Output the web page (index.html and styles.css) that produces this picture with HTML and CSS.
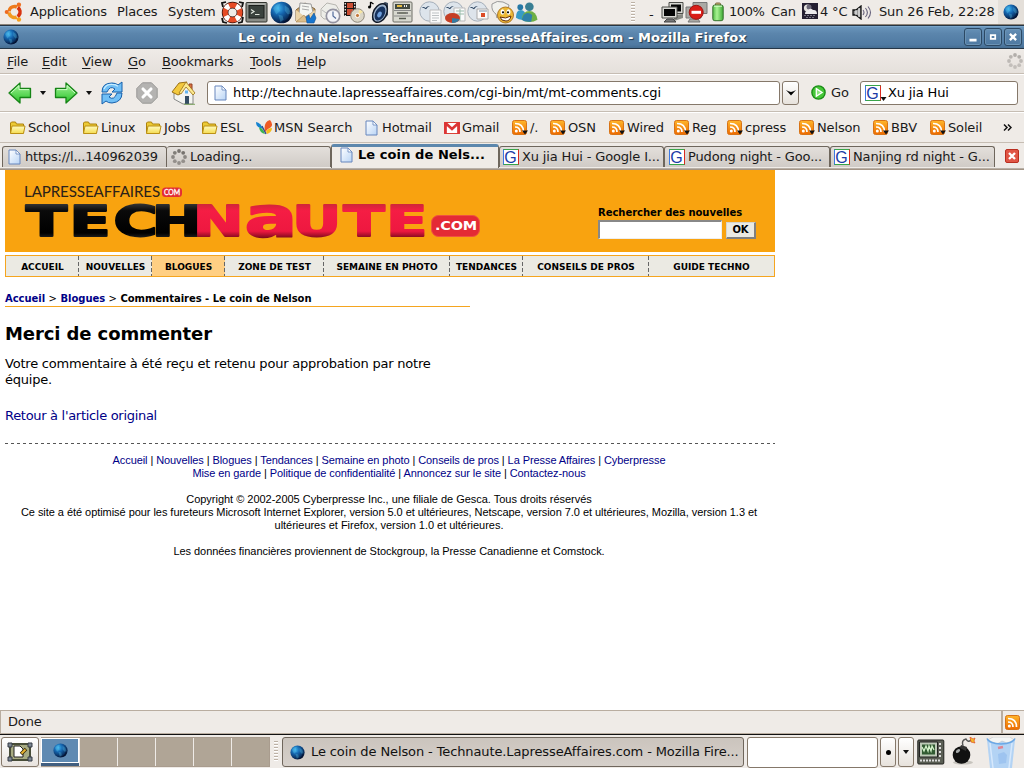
FILE: index.html
```html
<!DOCTYPE html>
<html lang="fr">
<head>
<meta charset="utf-8">
<title>Le coin de Nelson - Technaute.LapresseAffaires.com</title>
<link rel="stylesheet" href="styles.css">
</head>
<body>
<svg class="defs" width="0" height="0" aria-hidden="true">
<defs>
<radialGradient id="gGlobe" cx=".35" cy=".3" r=".75"><stop offset="0" stop-color="#3fb4ee"/><stop offset=".4" stop-color="#1565ae"/><stop offset="1" stop-color="#041336"/></radialGradient>
<linearGradient id="gGreen" x1="0" y1="0" x2="0" y2="1"><stop offset="0" stop-color="#a6f49a"/><stop offset="1" stop-color="#27c227"/></linearGradient>
<linearGradient id="gOrange" x1="0" y1="0" x2="0" y2="1"><stop offset="0" stop-color="#ffb62b"/><stop offset="1" stop-color="#ed6a00"/></linearGradient>
<linearGradient id="gPage" x1="0" y1="0" x2="1" y2="1"><stop offset="0" stop-color="#fff"/><stop offset="1" stop-color="#b9d4f5"/></linearGradient>
<linearGradient id="gFold" x1="0" y1="0" x2="0" y2="1"><stop offset="0" stop-color="#fffbc0"/><stop offset="1" stop-color="#f5dc50"/></linearGradient>
<linearGradient id="gBatt" x1="0" y1="0" x2="1" y2="0"><stop offset="0" stop-color="#51ba45"/><stop offset=".4" stop-color="#a9f393"/><stop offset="1" stop-color="#3ea933"/></linearGradient>
<linearGradient id="gBlack" gradientUnits="userSpaceOnUse" x1="0" y1="23" x2="0" y2="57"><stop offset="0" stop-color="#333"/><stop offset=".2" stop-color="#0a0a0a"/><stop offset=".85" stop-color="#000"/><stop offset="1" stop-color="#222"/></linearGradient>
<linearGradient id="gRed" gradientUnits="userSpaceOnUse" x1="0" y1="23" x2="0" y2="57"><stop offset="0" stop-color="#cf2638"/><stop offset=".2" stop-color="#f51d44"/><stop offset=".8" stop-color="#ee1840"/><stop offset="1" stop-color="#7d0a1c"/></linearGradient>
</defs>
<symbol id="ubuntu" viewBox="0 0 20 20"><g fill="none" stroke-width="3.600" stroke-dasharray="10.400 24.160"><circle cx="10.500" cy="10" r="5.500" stroke="#ee7a1c" transform="rotate(186 10.500 10)"/><circle cx="10.500" cy="10" r="5.500" stroke="#d8330f" transform="rotate(-54 10.500 10)"/><circle cx="10.500" cy="10" r="5.500" stroke="#f29a20" transform="rotate(66 10.500 10)"/></g><circle cx="2.700" cy="10" r="2" fill="#ee6b20"/><circle cx="14.900" cy="2.800" r="2.200" fill="#f07020"/><circle cx="14.900" cy="17.500" r="2.200" fill="#f6a01c"/></symbol>
<symbol id="life" viewBox="0 0 23 23"><path d="M2 6 1 2l4-1M18 1l4 1-1 4M1 17l1 4 4 1M17 22l4-1 1-5" fill="none" stroke="#111" stroke-width="1.8"/><circle cx="11.5" cy="11.5" r="7.4" fill="none" stroke="#37120c" stroke-width="6.6"/><circle cx="11.5" cy="11.5" r="7.4" fill="none" stroke="#e64b25" stroke-width="5.2"/><circle cx="11.5" cy="11.5" r="7.4" fill="none" stroke="#fff" stroke-width="5.2" stroke-dasharray="4.6 7.02" transform="rotate(27 11.5 11.5)"/></symbol>
<symbol id="term" viewBox="0 0 23 23"><rect x="1" y="1.500" width="21" height="19.500" rx="1" fill="#8b8e88" stroke="#33352f"/><path d="M2.500 3h18" stroke="#c9cbc6"/><rect x="4" y="4.500" width="15" height="12.500" fill="#3a423d" stroke="#1c1f1c"/><path d="m6 8.500 3 2-3 2M10 13.500h4.500" fill="none" stroke="#dfe5dc" stroke-width="1.200"/></symbol>
<symbol id="globe" viewBox="0 0 22 22"><circle cx="11" cy="11" r="10.4" fill="url(#gGlobe)"/><path d="M3 7q3-5 7-4l-2 4 2 2-4 4zm11-3 4 3 2 5-3 1-3-4zm-6 9 4 1 1 4-3 2z" fill="#63cdf0" opacity=".3"/><path d="M11 20q8-2 8-10 3 8-3 10z" fill="#020b24" opacity=".5"/></symbol>
<symbol id="mail" viewBox="0 0 23 23"><path d="m2 9 9-7 10 6-1 12H2z" fill="#caa266" stroke="#806338"/><path d="m6 2 11 1 2 8-8 5-6-3z" fill="#f5f6f2" stroke="#999"/><path d="m8 5 7 1M8 8l7 1" stroke="#aaa"/><path d="m2 9 8 6-8 6zM21 9l-9 7 8 5z" fill="#ead3a8"/><path d="m2 21 8-7 5 7z" fill="#dcbf8c" stroke="#a98550" stroke-width=".6"/><path d="m12 16 3-2 1 4 4-6 2 5-2 5h-7z" fill="#1775ce" stroke="#135093" stroke-width=".6"/></symbol>
<symbol id="mailclock" viewBox="0 0 23 23"><path d="m3 8 6-6 9 2 3 5v8l-15 1-3-3z" fill="#edede8" stroke="#b7b6b0"/><path d="m4 9 7 5 8-6" fill="none" stroke="#bbb"/><circle cx="15" cy="15" r="6.7" fill="#f4f4f8" stroke="#9493a1" stroke-width="1.7"/><path d="M15 10.5V15l3 2.5" fill="none" stroke="#526b9b" stroke-width="1.2"/></symbol>
<symbol id="film" viewBox="0 0 23 23"><path d="M2 1h12v14H2z" fill="#1a1413"/><path d="M5 2h6v5H5zM5 8h6v6H5z" fill="#c94e34"/><path d="M3.3 2v13M12.7 2v13" stroke="#eee" stroke-width="1.3" stroke-dasharray="1.5 1.5"/><circle cx="15.5" cy="14.5" r="6.8" fill="#dbd6c7" stroke="#8e887b"/><path d="m15.5 14.5 2-6 3.5 2.2z" fill="#f8e7a3"/><circle cx="15.5" cy="14.5" r="2.1" fill="#c3793a" stroke="#fff"/></symbol>
<symbol id="speaker" viewBox="0 0 23 23"><path d="M7 8 18 1l3 1v12l-8 7-8-2z" fill="#39465a"/><ellipse cx="13" cy="12" rx="6.500" ry="10" fill="#9db2cc" stroke="#111927" stroke-width="1.500" transform="rotate(28 13 12)"/><ellipse cx="13" cy="12.500" rx="4.600" ry="7.600" fill="#16325e" transform="rotate(28 13 12.500)"/><ellipse cx="12.500" cy="13.500" rx="2" ry="3" fill="#6fa0dd" transform="rotate(28 12.500 13.500)"/><path d="M3.500 1v5M3.500 1l3 2" stroke="#000" stroke-width="1.3"/><circle cx="2.500" cy="6" r="1.5"/></symbol>
<symbol id="drawer" viewBox="0 0 23 23"><rect x="2" y="1" width="19" height="20" rx="1" fill="#d8d8cf" stroke="#6c6d64"/><path d="M4 3h15v5H4z" fill="#444b42"/><path d="M6 5h5" stroke="#e6bd42" stroke-width="2"/><path d="M13 5h4" stroke="#eee" stroke-dasharray="1 1" stroke-width="2"/><path d="M3 9.5h17M3 15h17" stroke="#888"/><circle cx="7" cy="12" r="1" fill="#666"/><circle cx="16" cy="12" r="1" fill="#666"/><path d="M8 12h7M8 17.5h7" stroke="#575b50" stroke-width="1.6"/></symbol>
<symbol id="ooball" viewBox="0 0 23 23"><circle cx="10.5" cy="10.5" r="9.7" fill="#dde4eb" stroke="#a4aeb9"/><path d="M2.500 6.500q2.500-1 4 .500Q8 5 11 5 8.500 6 7 8.300 5 6.800 2.500 6.500z" fill="#243d5a"/></symbol>
<symbol id="oodoc" viewBox="0 0 23 23"><use href="#ooball"/><path d="M11 9h11v13H11z" fill="#fafafa" stroke="#bbb"/><path d="M13 12h7M13 14.5h7M13 17h7M13 19.5h5" stroke="#bdc1c3"/></symbol>
<symbol id="oochart" viewBox="0 0 23 23"><use href="#ooball"/><path d="M11 7h11v13H11z" fill="#fafafa" stroke="#bbb"/><path d="M13 10h8M13 13h8M17 8v12" stroke="#9ba"/><ellipse cx="9.500" cy="17" rx="7.500" ry="5" fill="#c53f25"/><path d="M9 17v5q6 0 7.5-4z" fill="#347ba1"/></symbol>
<symbol id="oopres" viewBox="0 0 23 23"><use href="#ooball"/><path d="M10 8h11v10H10z" fill="#fafafa" stroke="#aaa"/><path d="M12 10h8" stroke="#9ab" stroke-width="1.3"/><path d="M14 12h4v4h-4z" fill="#db4b27"/></symbol>
<symbol id="smiley" viewBox="0 0 23 23"><path d="M1 3q5-4 11-2l6 3-2 8-8 1-2 4-1-4Q0 10 1 3z" fill="#f1f1ed" stroke="#999"/><circle cx="14.5" cy="14" r="8" fill="#ecb834" stroke="#ae782b"/><ellipse cx="11.5" cy="11" rx="2" ry="2.7" fill="#fff"/><ellipse cx="17.5" cy="11" rx="2" ry="2.7" fill="#fff"/><circle cx="12" cy="11.3" r="1.1"/><circle cx="17" cy="11.3" r="1.1"/><path d="M9 16q5.500 2.500 11-1-1 5-5 5-5 0-6-4z" fill="#fff" stroke="#652f0b"/></symbol>
<symbol id="msn" viewBox="0 0 24 23"><circle cx="5.500" cy="6" r="3" fill="#2678a6"/><path d="M1 17q0-8 5-8t6 8q-5 4-11 0z" fill="#379bc6"/><circle cx="15" cy="5.500" r="4.500" fill="#397e93"/><path d="M7 19q1-9 8-9t8.500 9q-8 5-16.500 0z" fill="#6eaf45"/><path d="M9 14q4-4 9 0l-1 7q-7 1-10-2z" fill="#2f80a8"/></symbol>
<symbol id="network" viewBox="0 0 23 23"><path d="M8 1.5h14v11H8z" fill="#d9d9d4" stroke="#4c4c48"/><path d="M10 3.5h10v7H10z" fill="#050505"/><path d="m13 14 9-1v4l-9 3z" fill="#888983"/><path d="M1 6h15v11H1z" fill="#d9d9d4" stroke="#4c4c48"/><path d="M3 8h11v7H3z" fill="#050505"/><path d="M6 18h6l3 3H3z" fill="#777" stroke="#444"/></symbol>
<symbol id="blocked" viewBox="0 0 23 23"><path d="M8 1.5h14v11H8zM1 6h15v11H1zM5 18h8l2 3H3z" fill="#aaa9a4" stroke="#777"/><circle cx="11.2" cy="11.3" r="7" fill="#d91e18" stroke="#9d1512"/><path d="M6.5 11.3h9.5" stroke="#fff" stroke-width="3"/></symbol>
<symbol id="battery" viewBox="0 0 12 20"><rect x="3.5" y="1" width="5" height="4" rx="1" fill="#c9b06f" stroke="#7c6945"/><rect x=".8" y="3" width="10.4" height="15.7" rx="2" fill="url(#gBatt)" stroke="#36702d"/><path d="M2 4.2h8" stroke="#d8ffc8"/></symbol>
<symbol id="weather" viewBox="0 0 16 16"><path d="M0 0h16v16H0z" fill="#241f31"/><circle cx="5.500" cy="5" r="3.600" fill="#e6e4e0"/><circle cx="7" cy="4" r="2.500" fill="#6c6878"/><path d="M3 11q0-3.500 3-3.500 2-3 5-.500 4-.500 4 4z" fill="#eceaec"/><path d="M2 12.500h12M4 14.500h8" stroke="#777482" stroke-dasharray="2 1"/></symbol>
<symbol id="volume" viewBox="0 0 20 15"><path d="M1 5h3l5-4v13l-5-4H1z" fill="#999" stroke="#111" stroke-width="1.3"/><path d="M4 5v5M7 3v9" stroke="#fff"/><path d="M11 5q2 2.5 0 5M13.4 3q4 4.5 0 9M16 1.5q5 6 0 12" fill="none" stroke="#68647e" stroke-width="1.1"/></symbol>
<symbol id="back" viewBox="0 0 24 22"><path d="M1 11 12 1v5.5h10.5v9H12V21z" fill="url(#gGreen)" stroke="#168416" stroke-width="1.3" stroke-linejoin="round"/><path d="M3 11 11 3.6v4h10" fill="none" stroke="#cdffc7"/></symbol>
<symbol id="refresh" viewBox="0 0 24 24"><path d="M2 11Q2 2 12 2q4 0 6 2l4-3v10H12l3-3q-5-4-8 3z" fill="#70bff6" stroke="#1660ac" stroke-linejoin="round"/><path d="M22 12q0 9-10 10-4 0-6-2l-4 3V13h10l-3 3q5 4 8-4z" fill="#70bff6" stroke="#1660ac" stroke-linejoin="round"/><path d="M4 8q2-5 8-4.7 4 0 6 2" fill="none" stroke="#c9eeff" stroke-width="1.3"/></symbol>
<symbol id="stop" viewBox="0 0 22 22"><path d="M6.5.8h9l5.7 5.7v9l-5.7 5.7h-9L.8 15.500V6.500z" fill="#b4b3b1" stroke="#999896"/><path d="m7 7 8 8m0-8-8 8" stroke="#fff" stroke-width="3.1" stroke-linecap="round"/></symbol>
<symbol id="home" viewBox="0 0 25 24"><path d="M18 3h3v6h-3z" fill="#dc7244" stroke="#934222"/><path d="M3 11 13 3l9 9v11H12l-9-5z" fill="#f3f4f1" stroke="#888"/><path d="m1 11 7-9 8-1-7 12-2 1z" fill="#f3c93e" stroke="#9a7017"/><path d="m15 1 9 11-2 2-7-8-5 7-2-1z" fill="#fce98e" stroke="#9a7017" stroke-width=".8"/><path d="M14 15h4v8h-4z" fill="#344d64"/><path d="M14 9.500h3v3h-3z" fill="#64b5f0"/><path d="M13 23.300h11" stroke="#7ca45e"/></symbol>
<symbol id="page" viewBox="0 0 13 16"><path d="M1 1h7l4 4v10H1z" fill="url(#gPage)" stroke="#6686bd"/><path d="M8 1v4h4z" fill="#fff" stroke="#6686bd" stroke-width=".8"/></symbol>
<symbol id="go" viewBox="0 0 15 15"><circle cx="7.500" cy="7.500" r="6.600" fill="#46c738" stroke="#198d15" stroke-width="1.4"/><path d="m5.300 3.600 5.800 3.900-5.800 3.900z" fill="#8be77d" stroke="#fff" stroke-width="1.3"/></symbol>
<symbol id="folder" viewBox="0 0 16 14"><path d="M1 12V2l1-1h4l1 2h7v9z" fill="#ecca35" stroke="#ad820c"/><path d="m1 12.500 1.500-7.500h13L14 12.500z" fill="url(#gFold)" stroke="#bc9015"/></symbol>
<symbol id="butterfly" viewBox="0 0 17 16"><path d="M7 9Q5 3 0 2q0 4 3 5.500z" fill="#1683d0"/><path d="M3 7.500q4 0 6 6.500-5-1-6-6.500z" fill="#3bb550"/><path d="M9 12Q7 2 14 0q5 6-2 9z" fill="#ef5a24"/><path d="M10 12q2-4 6-4 0 4-5 6z" fill="#f6bd1b"/><path d="m6 6 4 8" stroke="#28458b" stroke-width="1.300"/></symbol>
<symbol id="gmail" viewBox="0 0 16 12"><path d="M.5.500h15v11H.500z" fill="#fff" stroke="#dc4137"/><path d="M1.500 12V1l6.500 6 6.500-6v11" fill="none" stroke="#dc3535" stroke-width="2.700"/></symbol>
<symbol id="rss" viewBox="0 0 15 15"><rect x=".5" y=".5" width="14" height="14" rx="2" fill="url(#gOrange)" stroke="#d87316"/><circle cx="4.300" cy="11" r="1.500" fill="#fff"/><path d="M3 7q5 0 5 5M3 3.500q8.500 0 8.500 8.500" fill="none" stroke="#fff" stroke-width="1.700"/></symbol>
<symbol id="arrow" viewBox="0 0 6 4"><path d="M0 0h6L3 4z" fill="#111"/></symbol>
<symbol id="throb" viewBox="0 0 16 16"><g fill="currentColor"><circle cx="8" cy="2" r="1.900"/><circle cx="12.200" cy="3.800" r="1.900"/><circle cx="14" cy="8" r="1.900" opacity=".8"/><circle cx="12.200" cy="12.200" r="1.900" opacity=".7"/><circle cx="8" cy="14" r="1.900" opacity=".7"/><circle cx="3.800" cy="12.200" r="1.900" opacity=".7"/><circle cx="2" cy="8" r="1.900" opacity=".8"/><circle cx="3.800" cy="3.800" r="1.900" opacity=".9"/></g></symbol>
<symbol id="tabclose" viewBox="0 0 14 14"><rect x=".5" y=".5" width="13" height="13" rx="1.500" fill="#e05545" stroke="#b92e20"/><path d="m4 4 6 6m0-6-6 6" stroke="#fff" stroke-width="2.300"/></symbol>
<symbol id="desktop" viewBox="0 0 26 20"><path d="M3 2h20v16H3z" fill="#a7ab82" stroke="#484d38" stroke-width="2"/><path d="M1 1h4v4H1zM21 1h4v4h-4zM1 15h4v4H1zM21 15h4v4h-4z" fill="#7d8793" stroke="#343b45"/><path d="M7 4h6l3 3v8H7z" fill="#fff" stroke="#222"/><path d="m14 12 5-5" stroke="#372807" stroke-width="3.500"/><path d="m14.500 11.500 4-4" stroke="#e7b330" stroke-width="2"/></symbol>
<symbol id="monitor" viewBox="0 0 28 26"><rect x=".8" y="1" width="26" height="24" rx="1" fill="#5a5e54" stroke="#20221e"/><path d="M2.500 3h18v15h-18z" fill="#bdcab7" stroke="#222"/><path d="M5 5.500h13v10H5z" fill="#315b32"/><path d="m5 8 2 4 2-5 2 5 1-5 2 5 1-5 2 4" fill="none" stroke="#d2f2c9" stroke-width="1.300"/><path d="M22 5h3M22 9h3M22 13h3M22 17h3M3 21.500h21" stroke="#ddd" stroke-width="2" stroke-dasharray="2 1"/></symbol>
<symbol id="bomb" viewBox="0 0 25 28"><ellipse cx="12" cy="25.500" rx="10" ry="2" fill="#c6c3bd"/><circle cx="10.500" cy="18" r="8.800" fill="#111"/><path d="m10 8 6 2-1 4-6-3z" fill="#333"/><path d="M12 9q-2-6 3-7 2 4 5 1" fill="none" stroke="#555" stroke-width="1.500"/><path d="m19 0 3 2 2-1-1 3 1 2-4-1z" fill="#f3bd29" stroke="#e04c22" stroke-width=".7"/><ellipse cx="7" cy="14" rx="2.400" ry="1.500" fill="#a7aaaa" transform="rotate(-35 7 14)"/></symbol>
<symbol id="trash" viewBox="0 0 30 31"><path d="m1 3 3 28h22l3-28z" fill="#b3d3f4"/><path d="m4 6 3 25M26 6l-3 25" stroke="#d6e8fc" stroke-width="1.500"/><path d="m12 17 6-2 3 3-1 8-7 1z" fill="#8fbaec" opacity=".6"/><path d="M2 3 7 0h17l4 3-7 3-5-2-5 3z" fill="#f4f5f4" stroke="#c8cacc" stroke-width=".7"/><path d="M1 1.500q2 5 14 5.500 12-.500 14-5.500" fill="none" stroke="#6ba8e6" stroke-width="1.600"/><path d="m12 11 5-1" stroke="#df8592" stroke-width="2.500"/></symbol>
</svg>

<div class="screen">
  <header class="panel">
    <svg class="ubuntu"><use href="#ubuntu"/></svg>
    <span class="pm pm-app">Applications</span><span class="pm pm-places">Places</span><span class="pm pm-system">System</span>
    <div class="launchers">
      <svg><use href="#life"/></svg><svg><use href="#term"/></svg><svg><use href="#globe"/></svg><svg><use href="#mail"/></svg><svg><use href="#mailclock"/></svg><svg><use href="#film"/></svg><svg><use href="#speaker"/></svg><svg><use href="#drawer"/></svg>
    </div>
    <div class="launchers office">
      <svg><use href="#oodoc"/></svg><svg><use href="#oochart"/></svg><svg><use href="#oopres"/></svg><svg><use href="#smiley"/></svg><svg><use href="#msn"/></svg>
    </div>
    <i class="grip"></i><span class="dash">-</span>
    <div class="tray"><svg class="net"><use href="#network"/></svg><svg class="net"><use href="#blocked"/></svg><svg class="batt"><use href="#battery"/></svg></div>
    <span class="t-pct">100%</span><span class="t-can">Can</span><svg class="wx"><use href="#weather"/></svg><span class="t-temp">4 °C</span><svg class="vol"><use href="#volume"/></svg><span class="t-clock">Sun 26 Feb, 22:28</span>
    <div class="traycell"><svg><use href="#globe"/></svg></div>
  </header>

  <div class="titlebar">
    <svg class="ticon"><use href="#globe"/></svg>
    <div class="title">Le coin de Nelson - Technaute.LapresseAffaires.com - Mozilla Firefox</div>
    <div class="wbtns">
      <svg viewBox="0 0 18 18"><path d="M5 12.500h8" stroke="#fff" stroke-width="3"/></svg>
      <svg viewBox="0 0 18 18"><path d="M6.500 7h5v4h-5z" fill="none" stroke="#fff" stroke-width="2"/></svg>
      <svg viewBox="0 0 18 18"><path d="m5.500 5.500 7 7m0-7-7 7" stroke="#fff" stroke-width="2.600"/></svg>
    </div>
  </div>

  <nav class="menubar">
    <span style="width:35px"><u>F</u>ile</span><span style="width:40px"><u>E</u>dit</span><span style="width:46px"><u>V</u>iew</span><span style="width:34px"><u>G</u>o</span><span style="width:88px"><u>B</u>ookmarks</span><span style="width:47px"><u>T</u>ools</span><span><u>H</u>elp</span>
    <svg class="throbber"><use href="#throb"/></svg>
  </nav>

  <div class="toolbar">
    <svg class="b-back"><use href="#back"/></svg><svg class="dd dd1"><use href="#arrow"/></svg>
    <svg class="b-fwd"><use href="#back"/></svg><svg class="dd dd2"><use href="#arrow"/></svg>
    <svg class="b-ref"><use href="#refresh"/></svg><svg class="b-stop"><use href="#stop"/></svg><svg class="b-home"><use href="#home"/></svg>
    <div class="url"><svg><use href="#page"/></svg><span>http://technaute.lapresseaffaires.com/cgi-bin/mt/mt-comments.cgi</span></div>
    <div class="urldrop"><svg viewBox="0 0 10 7"><path d="m0 1 2.500 1.200L5 3l2.500-.8L10 1 5 6.500z"/></svg></div>
    <svg class="b-go"><use href="#go"/></svg><span class="golabel">Go</span>
    <div class="search"><b class="gg">G</b><svg class="sdd"><use href="#arrow"/></svg><span>Xu jia Hui</span></div>
  </div>

  <div class="bookmarks">
    <div style="width:73px"><svg class="fold"><use href="#folder"/></svg><span>School</span></div>
    <div style="width:63px"><svg class="fold"><use href="#folder"/></svg><span>Linux</span></div>
    <div style="width:56px"><svg class="fold"><use href="#folder"/></svg><span>Jobs</span></div>
    <div style="width:54px"><svg class="fold"><use href="#folder"/></svg><span>ESL</span></div>
    <div class="msnlink" style="width:110px"><svg class="bfly"><use href="#butterfly"/></svg><span>MSN Search</span></div>
    <div style="width:79px"><svg class="pg"><use href="#page"/></svg><span>Hotmail</span></div>
    <div style="width:67px"><svg class="gm"><use href="#gmail"/></svg><span>Gmail</span></div>
    <div class="feed" style="width:38px"><svg><use href="#rss"/></svg><svg class="fdd"><use href="#arrow"/></svg><span>/.</span></div>
    <div class="feed" style="width:59px"><svg><use href="#rss"/></svg><svg class="fdd"><use href="#arrow"/></svg><span>OSN</span></div>
    <div class="feed" style="width:65px"><svg><use href="#rss"/></svg><svg class="fdd"><use href="#arrow"/></svg><span>Wired</span></div>
    <div class="feed" style="width:53px"><svg><use href="#rss"/></svg><svg class="fdd"><use href="#arrow"/></svg><span>Reg</span></div>
    <div class="feed" style="width:72px"><svg><use href="#rss"/></svg><svg class="fdd"><use href="#arrow"/></svg><span>cpress</span></div>
    <div class="feed" style="width:74px"><svg><use href="#rss"/></svg><svg class="fdd"><use href="#arrow"/></svg><span>Nelson</span></div>
    <div class="feed" style="width:57px"><svg><use href="#rss"/></svg><svg class="fdd"><use href="#arrow"/></svg><span>BBV</span></div>
    <div class="feed" style="width:74px"><svg><use href="#rss"/></svg><svg class="fdd"><use href="#arrow"/></svg><span>Soleil</span></div>
    <svg class="more" viewBox="0 0 9 7"><path d="m1 .5 3 3-3 3M5 .5l3 3-3 3" fill="none" stroke="#111" stroke-width="1.500"/></svg>
  </div>

  <div class="tabs">
    <div class="tab tab1"><svg class="pg"><use href="#page"/></svg><span>https://l...140962039</span></div>
    <div class="tab tab2"><svg class="ld"><use href="#throb"/></svg><span>Loading...</span></div>
    <div class="tab active"><svg class="pg"><use href="#page"/></svg><span>Le coin de Nels...</span></div>
    <div class="tab tab4"><b class="gg">G</b><span>Xu jia Hui - Google I...</span></div>
    <div class="tab tab5"><b class="gg">G</b><span>Pudong night - Goo...</span></div>
    <div class="tab tab6"><b class="gg">G</b><span>Nanjing rd night - G...</span></div>
    <svg class="tclose"><use href="#tabclose"/></svg>
  </div>

  <main class="view">
    <div class="banner">
      <svg class="logo" viewBox="0 0 460 62">
        <text x="0" y="15.500" font-family="Lato,sans-serif" font-size="16" fill="#2b2119" textLength="136" lengthAdjust="spacingAndGlyphs">LAPRESSEAFFAIRES</text>
        <rect x="138" y="6.500" width="20" height="9.500" rx="3.500" fill="#e32d35"/>
        <text x="140" y="14" font-family="Lato,sans-serif" font-size="8" fill="#fff" stroke="#fff" stroke-width=".3" textLength="16" lengthAdjust="spacingAndGlyphs">COM</text>
        <g transform="scale(1.4 1)" font-family="DejaVu Sans,sans-serif" font-weight="bold" font-size="43.500" stroke-width="1.800" stroke-linejoin="round">
          <text x="1.200 32.400 63.700 91" y="55.500" fill="url(#gBlack)" stroke="url(#gBlack)">TECH</text>
          <text x="120.500 157.500 191.500 228 258.500" y="55.500" fill="url(#gRed)" stroke="url(#gRed)">N<tspan font-size="56">a</tspan>UTE</text>
        </g>
        <rect x="407.500" y="34.500" width="48" height="21" rx="7" fill="#e42a35" stroke="#ef5141"/>
        <text x="411" y="48.500" font-family="DejaVu Sans,sans-serif" font-weight="bold" font-size="11.500" fill="#fff" textLength="42" lengthAdjust="spacingAndGlyphs">.COM</text>
      </svg>
      <form class="find">
        <label>Rechercher des nouvelles</label>
        <div class="row"><div class="field"></div><div class="ok">OK</div></div>
      </form>
    </div>
    <nav class="sitenav">
      <a style="width:73px">ACCUEIL</a><a style="width:73px">NOUVELLES</a><a class="on" style="width:73px">BLOGUES</a><a style="width:99px">ZONE DE TEST</a><a style="width:126px">SEMAINE EN PHOTO</a><a style="width:73px">TENDANCES</a><a style="width:126px">CONSEILS DE PROS</a><a style="width:125px">GUIDE TECHNO</a>
    </nav>
    <div class="crumbs"><a>Accueil</a> <i>&gt;</i> <a>Blogues</a> <i>&gt;</i> <b>Commentaires - Le coin de Nelson</b></div>
    <h1>Merci de commenter</h1>
    <p class="msg">Votre commentaire à été reçu et retenu pour approbation par notre<br>équipe.</p>
    <p class="msg ret"><a>Retour à l'article original</a></p>
    <svg class="rule" viewBox="0 0 770 1"><path d="M0 .5h770" stroke="#555" stroke-dasharray="3 3"/></svg>
    <footer class="foot">
      <div class="f1"><a>Accueil</a> | <a>Nouvelles</a> | <a>Blogues</a> | <a>Tendances</a> | <a>Semaine en photo</a> | <a>Conseils de pros</a> | <a>La Presse Affaires</a> | <a>Cyberpresse</a></div>
      <div class="f2"><a>Mise en garde</a> | <a>Politique de confidentialité</a> | <a>Annoncez sur le site</a> | <a>Contactez-nous</a></div>
      <div class="f3">Copyright © 2002-2005 Cyberpresse Inc., une filiale de Gesca. Tous droits réservés</div>
      <div class="f4">Ce site a été optimisé pour les fureteurs Microsoft Internet Explorer, version 5.0 et ultérieures, Netscape, version 7.0 et ultérieures, Mozilla, version 1.3 et</div>
      <div class="f5">ultérieures et Firefox, version 1.0 et ultérieures.</div>
      <div class="f6">Les données financières proviennent de Stockgroup, la Presse Canadienne et Comstock.</div>
    </footer>
  </main>

  <div class="status"><span>Done</span><div class="feedbox"><svg><use href="#rss"/></svg></div></div>

  <div class="taskbar">
    <div class="showdesk"><svg><use href="#desktop"/></svg></div>
    <div class="pager"><div class="cur"><svg><use href="#globe"/></svg></div><div></div><div></div><div></div><div></div><div></div></div>
    <i class="grip"></i>
    <div class="task"><svg><use href="#globe"/></svg><span>Le coin de Nelson - Technaute.LapresseAffaires.com - Mozilla Fire...</span></div>
    <div class="entry"></div>
    <div class="mini"><i class="dot"></i></div><div class="mini m2"><svg><use href="#arrow"/></svg></div>
    <svg class="mon"><use href="#monitor"/></svg><svg class="bomb"><use href="#bomb"/></svg><svg class="trash"><use href="#trash"/></svg>
  </div>
</div>
</body>
</html>
```
FILE: styles.css
```css
* { box-sizing: border-box; }
body { margin: 0; background: #efebe7; overflow: hidden; }
.defs { position: absolute; }
svg { display: block; flex: none; }
.screen { width: 1024px; height: 768px; display: flex; flex-direction: column; font: 13px/16px "DejaVu Sans", sans-serif; letter-spacing: -0.15px; color: #1a1a1a; white-space: nowrap; overflow: hidden; }
.screen > * { flex: none; }
i { font-style: normal; }

.panel { height: 25px; display: flex; align-items: center; padding-left: 4px; background: #efebe7; border-bottom: 1px solid #8c8378; }
.panel span { flex: none; }
.ubuntu { width: 20px; height: 20px; margin-right: 6px; }
.pm-app { width: 87px; letter-spacing: -0.22px; }
.pm-places { width: 51px; }
.pm-system { width: 53px; }
.launchers { display: flex; width: 198px; flex: none; gap: 1.3px; }
.launchers svg { width: 23px; height: 23px; }
.launchers.office { width: 212px; gap: 1px; }
.grip { width: 4px; height: 21px; flex: none; background: repeating-linear-gradient(#bdb2a6 0 1px, #fff 1px 2px, #efebe7 2px 3px); }
.dash { width: 12px; margin-left: 14px; padding-top: 5px; }
.tray { display: flex; align-items: center; gap: 1px; width: 68px; flex: none; }
.net { width: 23px; height: 23px; }
.batt { width: 12px; height: 20px; margin-left: 3px; }
.t-pct { width: 42px; letter-spacing: -0.4px; }
.t-can { width: 31px; }
.wx { width: 16px; height: 16px; margin: -3px 2px 0 0; }
.t-temp { width: 32px; }
.vol { width: 20px; height: 15px; margin-right: 7px; }
.t-clock { width: 119px; }
.traycell { width: 26px; height: 24px; background: #e4dfd9; display: flex; align-items: center; justify-content: center; flex: none; }
.traycell svg { width: 16px; height: 16px; }

.titlebar { height: 24px; display: flex; align-items: center; padding: 0 2px 0 3px; border-top: 1px solid #253544; border-bottom: 1px solid #263747; background: linear-gradient(#6b97bd, #5b85ac 35%, #4f7aa2 85%, #456d91); box-shadow: inset 0 1px #7aa5c9; }
.ticon { width: 16px; height: 16px; margin-bottom: 1px; }
.title { flex: 1; padding: 1px 0 0 219px; font-weight: bold; color: #fff; text-shadow: 1px 1px 1px #22384d; letter-spacing: 0.06px; }
.wbtns { display: flex; gap: 2px; }
.wbtns svg { width: 18px; height: 18px; border: 1px solid #2c4964; border-radius: 3px; box-shadow: inset 0 0 0 1px #6b93b5; }

.menubar { height: 25px; display: flex; align-items: center; padding-left: 7px; background: linear-gradient(#efebe7, #e5e0db); border-bottom: 1px solid #c6bdb3; }
.menubar u { text-underline-offset: 2px; }
.menubar span { flex: none; padding-top: 1px; }
.throbber { width: 16px; height: 16px; margin: 0 1px 0 auto; color: #b2aeaa; }

.toolbar { height: 38px; display: flex; align-items: center; padding: 0 0 1px 8px; border-top: 1px solid #fff; border-bottom: 1px solid #c6bdb3; }
.b-back, .b-fwd { width: 24px; height: 22px; }
.b-fwd { transform: scaleX(-1); margin-left: 8px; }
.dd { width: 6px; height: 4px; margin-left: 8px; }
.b-ref { width: 24px; height: 24px; margin-left: 8px; }
.b-stop { width: 22px; height: 22px; margin-left: 12px; }
.b-home { width: 25px; height: 24px; margin-left: 13px; }
.url { width: 573px; height: 24px; margin-left: 11px; display: flex; align-items: center; border: 1px solid #85786a; border-radius: 3px; background: #fff; padding: 1px 0 0 6px; color: #000; letter-spacing: -0.09px; }
.url svg { width: 13px; height: 16px; margin-right: 6px; }
.urldrop { width: 17px; height: 24px; margin-left: 2px; border: 1px solid #85786a; border-radius: 3px; background: linear-gradient(#fff, #e7e2dc); display: flex; align-items: center; justify-content: center; flex: none; }
.urldrop svg { width: 10px; height: 7px; }
.b-go { width: 15px; height: 15px; margin-left: 12px; }
.golabel { width: 29px; margin-left: 5px; flex: none; padding-top: 1px; }
.search { position: relative; width: 158px; height: 24px; border: 1px solid #85786a; border-radius: 3px; background: #fff; display: flex; align-items: center; padding-left: 4px; color: #000; }
.search .gg { margin-right: 7px; }
.gg { width: 16px; height: 16px; flex: none; margin-right: 3px; background: #fff; border: 1px solid; border-color: #39a44a #d92a20 #39a44a #3c79e5; color: #1b3ba6; font: 16px/15px "Liberation Sans", Arial, sans-serif; letter-spacing: 0; text-align: center; text-indent: -1px; }
.sdd { position: absolute; left: 19px; top: 15px; width: 7px; height: 4px; }

.bookmarks { height: 31px; display: flex; align-items: center; padding-left: 9px; border-top: 1px solid #fff; border-bottom: 1px solid #c6bdb3; }
.bookmarks > div { display: flex; align-items: center; flex: none; position: relative; }
.fold { width: 17px; height: 14px; margin-right: 2px; }
.bfly { width: 17px; height: 16px; margin-right: 1px; }
.msnlink { letter-spacing: 0.05px; }
.pg { width: 13px; height: 16px; margin-right: 4px; }
.gm { width: 16px; height: 12px; margin-right: 2px; }
.bookmarks > .msnlink { padding-left: 1px; }
.feed svg { width: 15px; height: 15px; margin-right: 3px; }
.bookmarks > .feed { left: 1px; }
.feed .fdd { position: absolute; left: 10px; top: 10px; width: 6px; height: 5px; margin: 0; }
.more { width: 9px; height: 7px; }

.tabs { height: 27px; display: flex; align-items: flex-end; padding: 0 0 3px 2px; box-shadow: inset 0 -1px #a39485, inset 0 -2px #b8b0a7; }
.tab { height: 21px; display: flex; align-items: center; padding-left: 5px; border: 1px solid #6e665c; border-bottom: 0; border-radius: 3px 3px 0 0; background: linear-gradient(#e3dfdb, #d0cbc6); flex: none; overflow: hidden; }
.tab svg { width: 16px; height: 16px; margin-right: 3px; }
.tab .pg { width: 13px; margin-right: 4px; }
.tab .ld { color: #77736f; }
.tab1 { width: 165px; letter-spacing: -0.2px; }
.tab2 { width: 164px; padding-left: 4px; border-left: 0; letter-spacing: -0.15px; }
.tab.active { width: 168px; height: 24px; padding: 0 0 5px 8px; border-top: 3px solid #5c87ad; background: #efebe7; font-weight: bold; margin-bottom: -1px; color: #000; letter-spacing: 0.07px; }
.tab.active .pg { margin-right: 5px; }
.tab4 { width: 165px; padding-left: 3px; }
.tab5 { width: 166px; padding-left: 4px; }
.tab6 { width: 165px; padding-left: 3px; }
.tclose { width: 14px; height: 14px; margin: 0 0 4px 10px; }

.view { height: 540px; background: #fff; padding-left: 5px; color: #000; }
.banner { width: 770px; height: 82px; background: #f9a30f; display: flex; }
.logo { width: 460px; height: 62px; margin: 11px 0 0 19px; overflow: visible; }
.find { margin: 37px 0 0 114px; }
.find label { display: block; font: bold 10px/12px "DejaVu Sans", sans-serif; letter-spacing: -0.03px; }
.row { display: flex; margin-top: 1px; gap: 4px; }
.field { width: 124px; height: 19px; background: #fff; border-top: 2px solid #888; border-left: 2px solid #888; border-right: 1px solid #eee; border-bottom: 1px solid #eee; }
.ok { width: 30px; height: 17px; margin-top: 2px; background: #ebeae3; border: 1px solid #d6d4cc; border-right: 2px solid #808080; border-bottom: 2px solid #808080; font: bold 10px/14px "DejaVu Sans", sans-serif; text-align: center; }
.sitenav { width: 770px; height: 22px; margin-top: 3px; display: flex; border: 1px solid #f5a51f; background: #ebeae3; }
.sitenav a { flex: none; font: bold 9px/22px "DejaVu Sans", sans-serif; letter-spacing: 0; text-align: center; background: repeating-linear-gradient(#666 0 4px, transparent 4px 6px) right top / 1px 100% no-repeat; }
.sitenav a:last-child { background: none; }
.sitenav .on { background-color: #ffcf83; }
.crumbs { width: 465px; height: 30px; padding-top: 14px; border-bottom: 1px solid #f5a51f; font: bold 10px/16px "DejaVu Sans", sans-serif; letter-spacing: -0.03px; }
.crumbs a { color: #000087; }
.crumbs i { font-weight: normal; }
h1 { margin: 16px 0 0; font: bold 18px/22px "DejaVu Sans", sans-serif; letter-spacing: -0.1px; }
.msg { margin: 11px 0 0; font-size: 13px; line-height: 16px; letter-spacing: -0.21px; }
.ret { margin-top: 20px; letter-spacing: -0.3px; }
.msg a, .foot a { color: #000087; }
.rule { width: 770px; height: 1px; margin-top: 19px; }
.foot { width: 768px; margin-top: 10px; font: 11px/13px "Liberation Sans", Arial, sans-serif; letter-spacing: -0.05px; text-align: center; }
.f1, .f2 { letter-spacing: -0.08px; }
.f3, .f5 { letter-spacing: -0.02px; }
.f3, .f6 { margin-top: 13px; }

.status { height: 24px; display: flex; align-items: center; padding-left: 7px; border: 1px solid #b9ada0; border-width: 1px 0 1px 1px; }
.feedbox { margin-left: auto; width: 23px; height: 22px; border-left: 2px solid #b9ada0; padding: 4px 0 0 2px; }
.feedbox svg { width: 15px; height: 15px; }

.taskbar { height: 34px; display: flex; align-items: flex-start; padding: 2px 0 0 1px; border-top: 1px solid #111; }
.showdesk { width: 38px; height: 30px; border: 1px solid #85786a; border-radius: 3px; background: linear-gradient(#fff, #e8e3de); display: flex; align-items: center; justify-content: center; flex: none; }
.showdesk svg { width: 26px; height: 20px; }
.pager { width: 229px; height: 30px; margin-left: 2px; display: flex; gap: 1px; background: #efebe7; border: 1px solid #a99c8e; border-width: 1px 1px 1px 0; flex: none; }
.pager > div { flex: 1; background: #b0a596; }
.pager .cur { flex: 0 0 38px; background: #5f8ab2; box-shadow: inset 0 0 0 1px #fff; border-bottom: 3px solid #415f80; display: flex; align-items: center; justify-content: center; }
.pager svg { width: 15px; height: 15px; }
.taskbar .grip { margin: 4px 0 0 4px; }
.task { width: 462px; height: 30px; margin-left: 4px; border: 1px solid #6f665c; border-radius: 3px; background: linear-gradient(#cbc4bd, #d6d0ca); display: flex; align-items: center; padding-left: 7px; flex: none; color: #111; letter-spacing: -0.11px; }
.task svg { width: 15px; height: 15px; margin-right: 6px; }
.entry { width: 131px; height: 31px; margin-left: 3px; border: 1px solid #85786a; border-radius: 3px; background: #fff; flex: none; }
.mini { width: 16px; height: 30px; margin-left: 2px; border: 1px solid #85786a; border-radius: 3px; background: linear-gradient(#fff, #e7e2dc); display: flex; align-items: center; justify-content: center; flex: none; }
.mini svg { width: 6px; height: 4px; }
.dot { width: 5px; height: 5px; border-radius: 50%; background: #000; }
.mon { width: 28px; height: 26px; margin: 2px 0 0 3px; }
.bomb { width: 25px; height: 28px; margin-left: 6px; }
.trash { width: 30px; height: 31px; margin-left: 10px; }
```
